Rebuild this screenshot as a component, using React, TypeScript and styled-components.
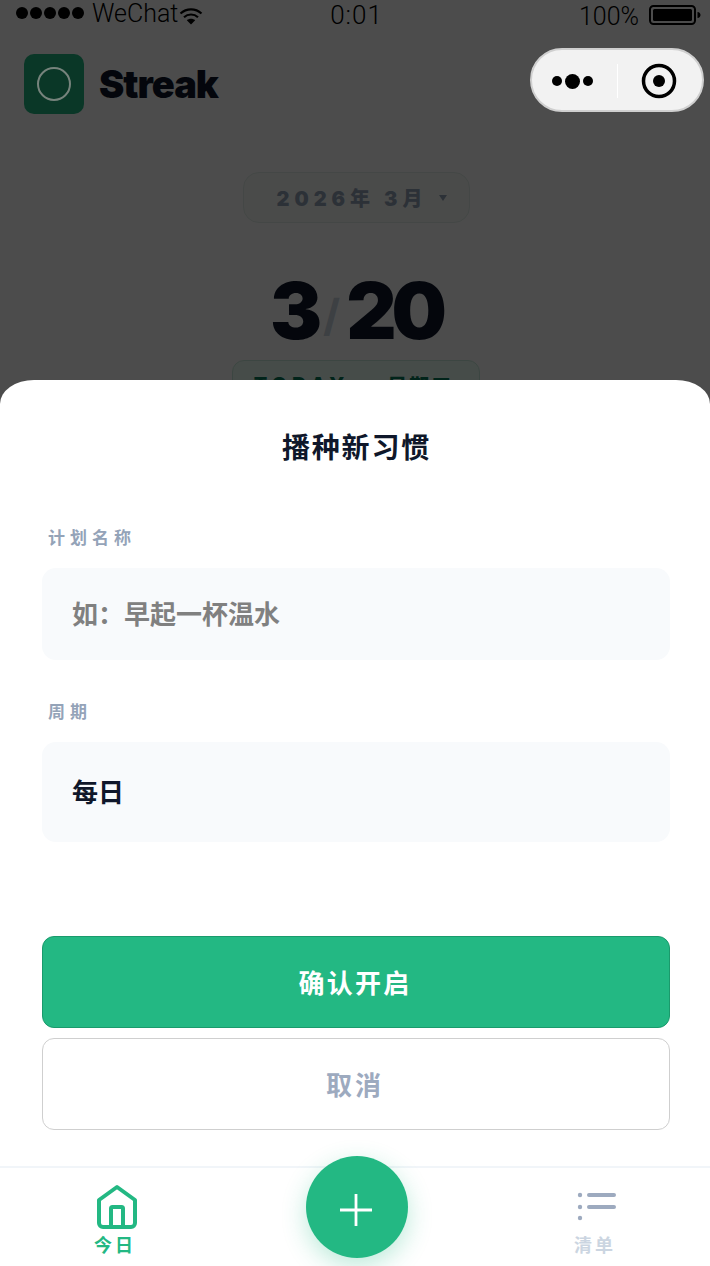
import React from "react";
import styled, { createGlobalStyle } from "styled-components";

const GlobalStyle = createGlobalStyle`
  html, body {
    margin: 0;
    padding: 0;
    background: #fff;
  }
  * {
    box-sizing: border-box;
  }
`;

const CJK = `Inter, "Noto Sans CJK SC", sans-serif`;

const App = () => {
  return (
    <Page>
      <GlobalStyle />
      <StatusBar>
        <Carrier>
          <Dots>
            <Dot />
            <Dot />
            <Dot />
            <Dot />
            <Dot />
          </Dots>
          <span>WeChat</span>
          <svg width="24" height="18" viewBox="0 0 24 18">
            <path d="M1.5 6.5C7.5 1 16.5 1 22.5 6.5" fill="none" stroke="#000" strokeWidth="2.2" />
            <path d="M5 10.2C9 6.6 15 6.6 19 10.2" fill="none" stroke="#000" strokeWidth="2.2" />
            <path d="M12 17.5L7.8 13.2C10.2 11.2 13.8 11.2 16.2 13.2Z" fill="#000" />
          </svg>
        </Carrier>
        <Clock>0:01</Clock>
        <Power>
          <span>100%</span>
          <svg width="52" height="20" viewBox="0 0 52 20">
            <rect x="1" y="1" width="45" height="18" rx="3.5" fill="none" stroke="#000" strokeWidth="2" />
            <rect x="4" y="4" width="39" height="12" rx="1.5" fill="#000" />
            <path d="M48.500 7C50.500 7 51.500 8.500 51.500 10C51.500 11.500 50.500 13 48.500 13Z" fill="#000" />
          </svg>
        </Power>
      </StatusBar>

      <Header>
        <Logo>
          <LogoRing />
        </Logo>
        <Brand>Streak</Brand>
      </Header>

      <MonthRow>
        <MonthPill>
          <MonthText>2026年 3月</MonthText>
          <Caret />
        </MonthPill>
      </MonthRow>

      <DateRow>
        <span>3</span>
        <Slash>/</Slash>
        <span>20</span>
      </DateRow>

      <BadgeRow>
        <TodayBadge>
          <span>TODAY</span>
          <Weekday>星期五</Weekday>
        </TodayBadge>
      </BadgeRow>

      <Mask />

      <Capsule>
        <MoreDots>
          <MoreDot $size={10} />
          <MoreDot $size={15} />
          <MoreDot $size={10} />
        </MoreDots>
        <CapsuleLine />
        <svg width="36" height="36" viewBox="0 0 36 36">
          <circle cx="18" cy="18" r="15.500" fill="none" stroke="#000" strokeWidth="3.500" />
          <circle cx="18" cy="18" r="6" fill="#000" />
        </svg>
      </Capsule>

      <Sheet>
        <SheetTitle>播种新习惯</SheetTitle>
        <Field>
          <FieldLabel>计划名称</FieldLabel>
          <NameInput placeholder="如：早起一杯温水" readOnly />
        </Field>
        <Field>
          <FieldLabel>周期</FieldLabel>
          <PeriodPicker>每日</PeriodPicker>
        </Field>
        <Actions>
          <ConfirmButton>确认开启</ConfirmButton>
          <CancelButton>取消</CancelButton>
        </Actions>
      </Sheet>

      <TabBar>
        <Tab>
          <svg width="48" height="48" viewBox="0 0 48 48">
            <path
              d="M26 4L44 17V40A4 4 0 0 1 40 44H12A4 4 0 0 1 8 40V17Z"
              fill="none"
              stroke="#23b883"
              strokeWidth="4"
              strokeLinejoin="round"
            />
            <path
              d="M20 44V25.500A1.500 1.500 0 0 1 21.500 24H30.500A1.500 1.500 0 0 1 32 25.500V44"
              fill="none"
              stroke="#23b883"
              strokeWidth="4"
            />
          </svg>
          <TabLabel $active>今日</TabLabel>
        </Tab>
        <Fab>
          <svg width="32" height="32" viewBox="0 0 32 32">
            <path d="M16 0V32M0 16H32" stroke="#fff" strokeWidth="2.800" />
          </svg>
        </Fab>
        <Tab>
          <svg width="48" height="48" viewBox="0 0 48 48">
            <circle cx="9" cy="12" r="2.200" fill="#9daabf" />
            <circle cx="9" cy="24" r="2.200" fill="#9daabf" />
            <circle cx="9" cy="35" r="2.200" fill="#9daabf" />
            <path d="M18 12H43M18 24H43" stroke="#9daabf" strokeWidth="4" strokeLinecap="round" />
          </svg>
          <TabLabel>清单</TabLabel>
        </Tab>
      </TabBar>
    </Page>
  );
};

export default App;

const Page = styled.div`
  position: relative;
  width: 710px;
  height: 1266px;
  overflow: hidden;
  background: #fff;
  font-family: ${CJK};
`;

const StatusBar = styled.div`
  display: flex;
  align-items: center;
  justify-content: space-between;
  height: 30px;
  padding: 0 9px 0 16px;
  font-family: Roboto, "Liberation Sans", sans-serif;
  font-weight: 300;
  line-height: 24px;
  color: #000;
`;

const Carrier = styled.div`
  display: flex;
  align-items: center;
  width: 200px;
  gap: 8px;
  font-size: 25px;

  span {
    margin-top: -3px;
  }

  svg {
    margin-left: -7px;
    margin-top: 2px;
  }
`;

const Dots = styled.div`
  display: flex;
  gap: 2px;
  margin-top: -4px;
`;

const Dot = styled.div`
  width: 12px;
  height: 12px;
  border-radius: 50%;
  background: #000;
`;

const Clock = styled.div`
  margin-top: -1px;
  margin-left: -4px;
  font-size: 26px;
  letter-spacing: 1px;
`;

const Power = styled.div`
  display: flex;
  align-items: center;
  justify-content: flex-end;
  width: 200px;
  gap: 10px;
  font-size: 25px;

  span {
    margin-top: 3px;
  }
`;

const Header = styled.div`
  display: flex;
  align-items: center;
  gap: 15px;
  margin-top: 24px;
  padding-left: 24px;
`;

const Logo = styled.div`
  display: flex;
  align-items: center;
  justify-content: center;
  width: 60px;
  height: 60px;
  border-radius: 10px;
  background: #23b883;
`;

const LogoRing = styled.div`
  position: relative;
  z-index: 1;
  width: 34px;
  height: 34px;
  border-radius: 50%;
  border: 2px solid #76837c;
`;

const Brand = styled.div`
  font-size: 38px;
  font-weight: 900;
  letter-spacing: -1px;
  color: #0f172a;
`;

const MonthRow = styled.div`
  display: flex;
  justify-content: center;
  margin-top: 58px;
  margin-left: 2px;
`;

const MonthPill = styled.div`
  display: flex;
  align-items: center;
  gap: 12px;
  height: 51px;
  width: 227px;
  padding-left: 33px;
  border-radius: 16px;
  border: 1px solid #e3efe9;
  background: #f8fbf9;
`;

const MonthText = styled.div`
  font-size: 20px;
  font-weight: 900;
  letter-spacing: 5px;
  color: #94a3b8;
  white-space: nowrap;
`;

const Caret = styled.div`
  width: 0;
  height: 0;
  border-left: 4px solid transparent;
  border-right: 4px solid transparent;
  border-top: 6px solid #94a3b8;
`;

const DateRow = styled.div`
  display: flex;
  align-items: center;
  justify-content: center;
  gap: 6px;
  height: 90px;
  margin-top: 42px;
  margin-left: 2px;
  font-size: 78px;
  font-weight: 900;
  letter-spacing: -5px;
  color: #0f172a;
`;

const Slash = styled.span`
  font-size: 44px;
  font-weight: 700;
  letter-spacing: 0;
  color: #cbd5e1;
  transform: translateY(5px);
`;

const BadgeRow = styled.div`
  display: flex;
  justify-content: center;
  margin-top: 5px;
  margin-left: 2px;
`;

const TodayBadge = styled.div`
  display: flex;
  align-items: center;
  justify-content: center;
  gap: 38px;
  width: 248px;
  height: 50px;
  padding-right: 5px;
  border-radius: 12px;
  border: 1px solid #c9ecdc;
  background: #ecfdf5;
  font-size: 20px;
  font-weight: 800;
  letter-spacing: 5px;
  color: #047857;
`;

const Weekday = styled.span`
  letter-spacing: 2px;
`;

const Mask = styled.div`
  position: absolute;
  inset: 0;
  background: rgba(0, 0, 0, 0.7);
`;

const Capsule = styled.div`
  position: absolute;
  top: 48px;
  left: 530px;
  display: flex;
  align-items: center;
  width: 174px;
  height: 64px;
  padding: 2px 0 0 20px;
  border-radius: 32px;
  border: 2px solid #cfcfcf;
  background: #f2f2f2;
`;

const MoreDots = styled.div`
  display: flex;
  align-items: center;
  gap: 3px;
  width: 65px;
`;

const MoreDot = styled.div<{ $size: number }>`
  width: ${(p) => p.$size}px;
  height: ${(p) => p.$size}px;
  border-radius: 50%;
  background: #000;
`;

const CapsuleLine = styled.div`
  width: 1px;
  height: 34px;
  margin-right: 23px;
  background: #fff;
`;

const Sheet = styled.div`
  position: absolute;
  top: 380px;
  left: 0;
  right: 0;
  bottom: 0;
  display: flex;
  flex-direction: column;
  padding: 0 40px 0 42px;
  border-radius: 34px 34px 0 0 / 24px 24px 0 0;
  background: #fff;
`;

const SheetTitle = styled.div`
  margin-top: 48px;
  margin-bottom: 58px;
  height: 40px;
  line-height: 40px;
  padding-left: 1px;
  text-align: center;
  font-size: 28px;
  font-weight: 700;
  letter-spacing: 1.800px;
  color: #0f172a;
`;

const Field = styled.div`
  display: flex;
  flex-direction: column;
  margin-bottom: 40px;
`;

const FieldLabel = styled.div`
  height: 24px;
  line-height: 24px;
  margin-bottom: 18px;
  padding-left: 6px;
  font-size: 17px;
  font-weight: 700;
  letter-spacing: 5px;
  color: #94a3b8;
`;

const NameInput = styled.input`
  width: 100%;
  height: 92px;
  padding: 0 30px;
  border: none;
  outline: none;
  border-radius: 14px;
  background: #f8fafc;
  font-family: ${CJK};
  font-size: 26px;
  font-weight: 700;
  color: #0f172a;

  &::placeholder {
    color: #808080;
    opacity: 1;
  }
`;

const PeriodPicker = styled.div`
  display: flex;
  align-items: center;
  height: 100px;
  padding: 0 30px 4px;
  border-radius: 14px;
  background: #f8fafc;
  font-size: 26px;
  font-weight: 700;
  color: #0f172a;
`;

const Actions = styled.div`
  display: flex;
  flex-direction: column;
  gap: 10px;
  margin-top: 54px;
`;

const BaseButton = styled.button`
  width: 100%;
  height: 92px;
  padding: 0 2px 2px 0;
  border-radius: 12px;
  font-family: ${CJK};
  font-size: 26px;
  font-weight: 700;
`;

const ConfirmButton = styled(BaseButton)`
  border: 1px solid #1a9a6c;
  background: #23b883;
  letter-spacing: 2.300px;
  color: #fff;
`;

const CancelButton = styled(BaseButton)`
  border: 1px solid #cfcfcf;
  background: #fff;
  letter-spacing: 3px;
  color: #9daabf;
`;

const TabBar = styled.div`
  position: absolute;
  left: 0;
  right: 0;
  bottom: 0;
  display: flex;
  justify-content: space-between;
  height: 100px;
  padding: 15px 91px 0 91px;
  border-top: 2px solid #f1f5f9;
  background: #fff;
`;

const Tab = styled.div`
  display: flex;
  flex-direction: column;
  align-items: center;
  width: 48px;

  svg {
    flex-shrink: 0;
    margin-bottom: 3px;
  }
`;

const TabLabel = styled.div<{ $active?: boolean }>`
  height: 24px;
  line-height: 24px;
  white-space: nowrap;
  font-size: 18px;
  font-weight: 700;
  letter-spacing: 3px;
  color: ${(p) => (p.$active ? "#23b883" : "#cbd5e1")};
`;

const Fab = styled.div`
  position: absolute;
  top: -12px;
  left: 306px;
  display: flex;
  align-items: center;
  justify-content: center;
  width: 102px;
  height: 102px;
  padding: 6px 2px 0 0;
  border-radius: 50%;
  background: #23b883;
  box-shadow: 0 8px 24px rgba(35, 184, 131, 0.3);
`;
